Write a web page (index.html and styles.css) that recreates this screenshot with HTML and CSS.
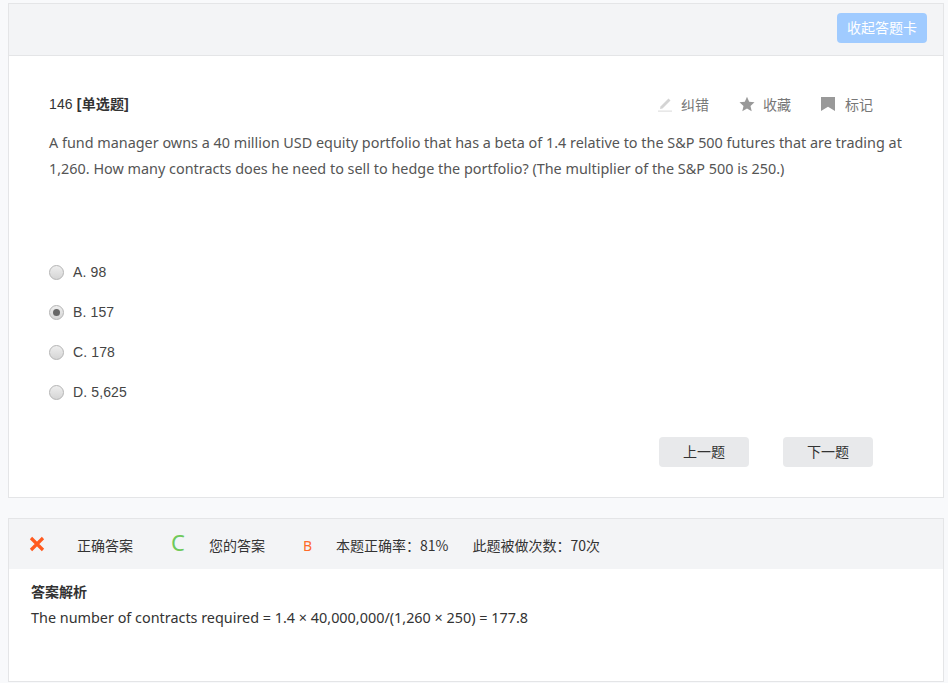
FILE: index.html
```html
<!DOCTYPE html>
<html lang="zh">
<head>
<meta charset="utf-8">
<title>答题卡</title>
<link rel="stylesheet" href="styles.css">
</head>
<body>
<section class="panel question-panel">
  <header class="card-bar">
    <button class="collapse-btn">收起答题卡</button>
  </header>
  <div class="question-body">
    <div class="question-head">
      <div class="question-no">146 <b>[单选题]</b></div>
      <div class="tools">
        <span class="tool tool-fix">
          <svg class="icon" width="16" height="16" viewBox="0 0 16 16"><path d="M3.5 10.5 11.5 2.5 13.5 4.5 5.5 12.5 3 13z" fill="#d4d4d4"/><rect x="1" y="14.6" width="14" height="1" fill="#d9d9d9"/></svg>
          <span class="tool-text">纠错</span>
        </span>
        <span class="tool tool-star">
          <svg class="icon" width="16" height="16" viewBox="0 0 16 16"><path d="M8 .8l2.2 5 5.3.5-4 3.6 1.2 5.3L8 12.4l-4.7 2.8 1.2-5.3-4-3.6 5.3-.5z" fill="#999"/></svg>
          <span class="tool-text">收藏</span>
        </span>
        <span class="tool tool-mark">
          <svg class="icon" width="14" height="14" viewBox="0 0 14 14"><path d="M0 0h14v14L7 9.8 0 14z" fill="#999"/></svg>
          <span class="tool-text">标记</span>
        </span>
      </div>
    </div>
    <p class="stem">A fund manager owns a 40 million USD equity portfolio that has a beta of 1.4 relative to the S&amp;P 500 futures that are trading at 1,260. How many contracts does he need to sell to hedge the portfolio? (The multiplier of the S&amp;P 500 is 250.)</p>
    <ul class="options">
      <li class="option"><span class="radio"></span>A. 98</li>
      <li class="option"><span class="radio checked"></span>B. 157</li>
      <li class="option"><span class="radio"></span>C. 178</li>
      <li class="option"><span class="radio"></span>D. 5,625</li>
    </ul>
    <div class="pager">
      <button class="page-btn">上一题</button>
      <button class="page-btn">下一题</button>
    </div>
  </div>
</section>
<section class="panel answer-panel">
  <div class="answer-bar">
    <svg class="wrong" width="16" height="16" viewBox="0 0 16 16"><path d="M2 2l12 12M14 2L2 14" stroke="#ff5a1f" stroke-width="3.2" fill="none"/></svg>
    <span class="label label-correct">正确答案</span>
    <span class="correct-letter">C</span>
    <span class="label label-yours">您的答案</span>
    <span class="your-letter">B</span>
    <span class="label label-rate">本题正确率：81%</span>
    <span class="label label-count">此题被做次数：70次</span>
  </div>
  <div class="analysis">
    <h4 class="analysis-title">答案解析</h4>
    <p class="analysis-text">The number of contracts required = 1.4 × 40,000,000/(1,260 × 250) = 177.8</p>
  </div>
</section>
</body>
</html>
```
FILE: styles.css
```css
* { box-sizing: border-box; }
html, body { margin: 0; padding: 0; }
body {
  background: #f8f9fb;
  padding: 3px 4px 0 8px;
  height: 683px;
  overflow: hidden;
  font-family: "Noto Sans", "Noto Sans CJK SC", sans-serif;
  font-size: 14px;
  color: #333;
}
.panel {
  background: #fff;
  border: 1px solid #e4e5e7;
}
.question-panel { height: 495px; }
.card-bar {
  height: 52px;
  background: #f3f4f6;
  border-bottom: 1px solid #e4e5e7;
  display: flex;
  align-items: flex-start;
  justify-content: flex-end;
  padding: 9px 16px 0 0;
}
.collapse-btn {
  width: 90px;
  height: 30px;
  border: 0;
  border-radius: 4px;
  background: #a0cbff;
  color: #fff;
  font: 14px "Noto Sans CJK SC", sans-serif;
  padding: 0 0 2px;
}
.question-body { padding: 0 39px 0 40px; }
.question-head {
  display: flex;
  justify-content: space-between;
  align-items: center;
  padding-top: 36px;
  height: 58px;
}
.question-no {
  font: 14px "Liberation Sans", "Noto Sans CJK SC", sans-serif;
  letter-spacing: .15px;
  color: #333;
}
.question-no b { color: #333; }
.tools {
  display: flex;
  gap: 30px;
  padding-right: 31px;
  color: #777;
  font: 14px "Noto Sans CJK SC", sans-serif;
}
.tool { display: flex; align-items: center; gap: 8px; }
.tool-mark { gap: 10px; }
.tool .icon { margin-top: 2px; }
.tool-text { padding-top: 2px; }
.stem {
  margin: 16px 0 0;
  height: 122px;
  font-size: 14.4px;
  line-height: 26px;
  color: #555;
}
.options { list-style: none; margin: 0; padding: 0; }
.option {
  display: flex;
  align-items: center;
  height: 40px;
  font: 14px "Liberation Sans", sans-serif;
  letter-spacing: .12px;
  color: #444;
}
.radio {
  width: 15px;
  height: 15px;
  margin-right: 9px;
  border-radius: 50%;
  border: 1px solid #b4b4b4;
  background: linear-gradient(#eee, #d5d5d5);
  display: flex;
  align-items: center;
  justify-content: center;
}
.radio.checked::after {
  content: "";
  width: 7px;
  height: 7px;
  border-radius: 50%;
  background: #666;
}
.pager {
  display: flex;
  justify-content: flex-end;
  gap: 34px;
  margin-top: 25px;
  padding-right: 31px;
}
.page-btn {
  width: 90px;
  height: 30px;
  border: 0;
  border-radius: 4px;
  background: #e8e9eb;
  color: #333;
  font: 14px "Noto Sans CJK SC", sans-serif;
  padding: 0 0 3px;
}
.answer-panel { margin-top: 20px; height: 164px; }
.answer-bar {
  height: 50px;
  background: #f3f4f6;
  display: flex;
  align-items: center;
  padding-left: 20px;
  padding-top: 2px;
  font: 14px "Noto Sans CJK SC", sans-serif;
  color: #333;
}
.wrong { margin-right: 32px; margin-bottom: 2px; }
.label { white-space: nowrap; }
.correct-letter {
  margin: 0 24px 0 38px;
  font: 22px "Noto Sans", sans-serif;
  color: #6fc95a;
  position: relative;
  top: -3px;
}
.your-letter {
  margin: 0 24px 0 38px;
  font: 14px "Noto Sans", sans-serif;
  color: #ff6a2a;
}
.label-count { margin-left: 24px; }
.analysis { padding: 12px 22px; }
.analysis-title { margin: 0; font: bold 14px/20px "Noto Sans CJK SC", sans-serif; color: #333; }
.analysis-text { margin: 7px 0 0; font-size: 14.4px; line-height: 20px; color: #333; }
```
